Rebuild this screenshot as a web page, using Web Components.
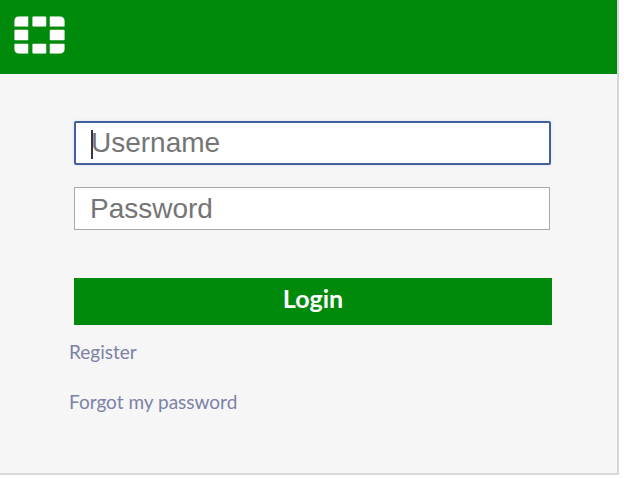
<!DOCTYPE html>
<html lang="en"><head><meta charset="utf-8"><title>Login</title>
<style>html,body{margin:0;padding:0;background:#fff}</style></head>
<body>
<login-panel>
  <app-header slot="header"></app-header>
  <text-field focused>Username</text-field>
  <text-field>Password</text-field>
  <login-button>Login</login-button>
  <nav-link>Register</nav-link>
  <nav-link>Forgot my password</nav-link>
</login-panel>
<script>
function def(name, css, html){
  customElements.define(name, class extends HTMLElement{
    constructor(){super();this.attachShadow({mode:'open'}).innerHTML='<style>'+css+'</style>'+html;}
  });
}
def('login-panel',`
  :host{display:block;width:619px;height:475px;box-sizing:border-box;background:#f6f6f7;border-right:2px solid #d6d6d6;border-bottom:2px solid #d9d9d9}
  .form{display:flex;flex-direction:column;padding:47px 0 0 74px}
`,`<slot name="header"></slot><div class="form"><slot></slot></div>`);
def('app-header',`
  :host{display:flex;align-items:flex-start;height:74px;background:#008a0c;box-sizing:border-box;padding:16px 0 0 14px}
  svg{display:block}
`,`<svg width="52" height="38" viewBox="0 0 52 38" fill="#fff" stroke="#fff" stroke-width=".5" aria-label="Logo">
  <path d="M4.700 .7H14V10.300H.7V4.700Q.7 .7 4.700 .7Z"/><rect x="18.700" y=".7" width="13.300" height="9.600" rx=".6"/><path d="M36 .7H46Q50.300 .7 50.300 5V10.300H36Z"/>
  <rect x=".7" y="14" width="13.300" height="10" rx=".6"/><rect x="36" y="14" width="14.300" height="10" rx=".6"/>
  <path d="M.7 28H14V37.300H5Q.7 37.300 .7 33Z"/><rect x="18.700" y="28" width="13.300" height="9.300" rx=".6"/><path d="M36 28H50.300V33Q50.300 37.300 46 37.300H36Z"/>
</svg>`);
def('text-field',`
  :host{display:flex;align-items:center;position:relative;box-sizing:border-box;width:476px;height:43px;margin-bottom:23px;padding-left:15px;background:#fff;border:1px solid #a9a9a9;font:28px/1 "Liberation Sans",Arial,sans-serif;color:#757575}
  :host([focused]){width:477px;height:44px;margin-bottom:22px;border:2px solid #44609a;border-radius:2px;padding-left:15px;box-shadow:0 0 3px #cfe0f5}
  :host([focused]) .caret{display:block}
  .caret{display:none;position:absolute;left:15px;top:7px;width:2px;height:29px;background:#33384a}
`,`<span class="caret"></span><slot></slot>`);
def('login-button',`
  :host{display:flex;align-items:center;justify-content:center;box-sizing:border-box;width:478px;height:47px;margin-top:25px;background:#008a0c;color:#fff;font:700 25px/1 Lato,sans-serif;padding-bottom:7px;cursor:pointer}
`,`<slot></slot>`);
def('nav-link',`
  :host{display:block;margin-left:-5px;position:relative;height:50px;font:19px/54px Lato,sans-serif;color:#7c82a6;cursor:pointer}
`,`<slot></slot>`);
</script>
</body></html>
